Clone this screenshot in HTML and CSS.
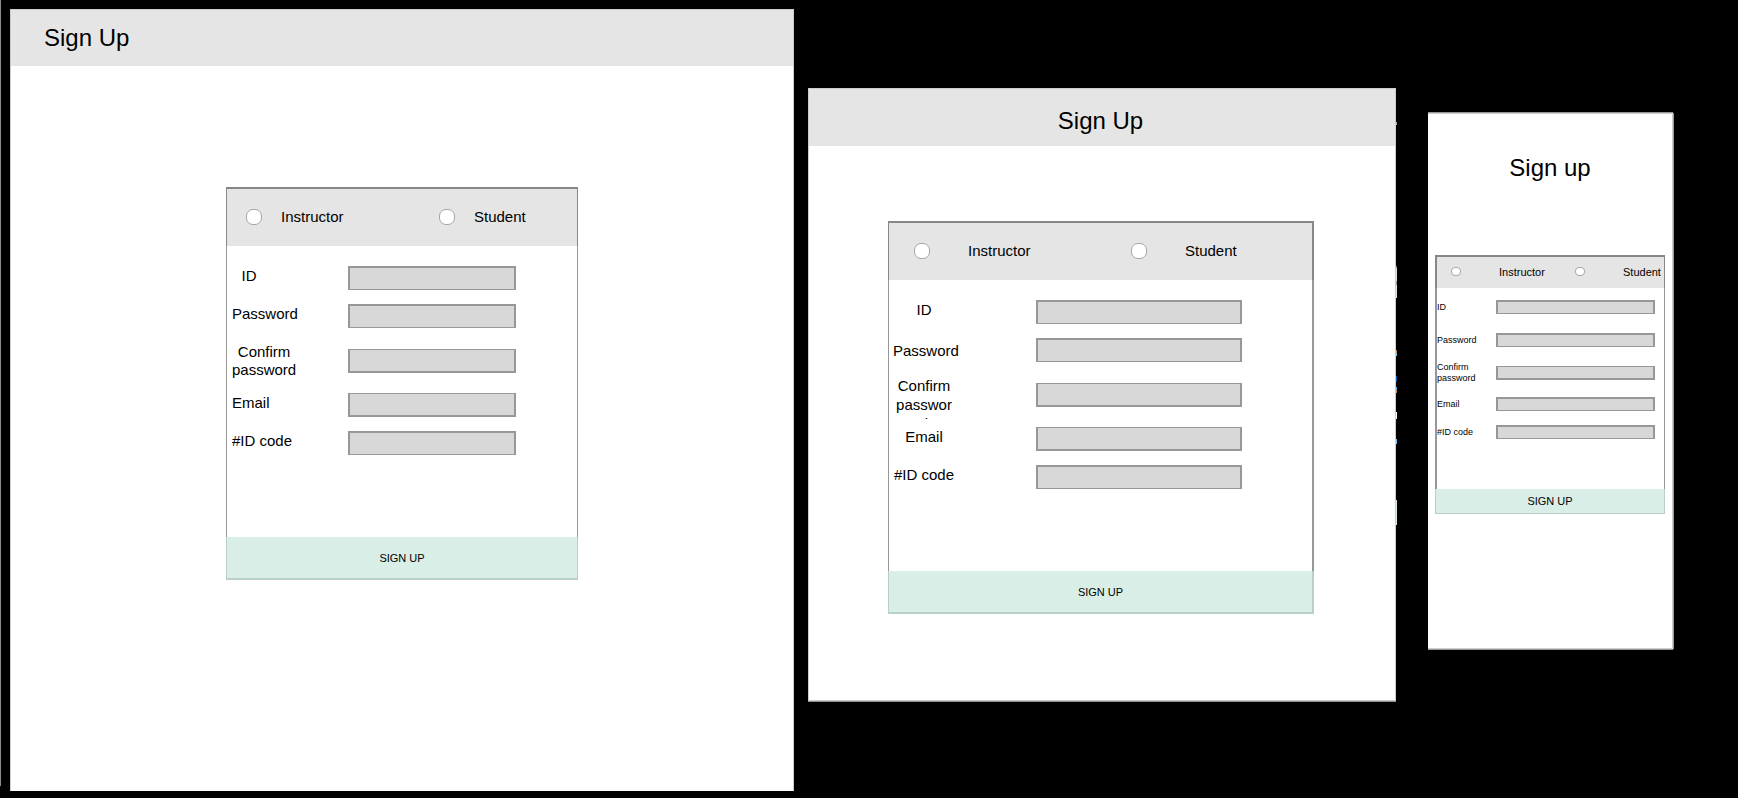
FILE: index.html
```html
<!DOCTYPE html>
<html lang="en">
<head>
<meta charset="utf-8">
<title>Sign Up</title>
<link rel="stylesheet" href="styles.css">
</head>
<body>
<main class="board">
  <section class="frame frame--desktop">
    <header class="bar"><h1 class="title">Sign Up</h1></header>
    <form class="card">
      <div class="roles">
        <div class="role"><input class="radio" type="radio" name="role-d" id="d-instructor"><label for="d-instructor">Instructor</label></div>
        <div class="role"><input class="radio" type="radio" name="role-d" id="d-student"><label for="d-student">Student</label></div>
      </div>
      <div class="fields">
        <div class="field"><label class="name" for="d-id">ID</label><input class="box" type="text" id="d-id"></div>
        <div class="field"><label class="name" for="d-pass">Password</label><input class="box" type="password" id="d-pass"></div>
        <div class="field field--middle"><label class="name" for="d-confirm">Confirm<br>password</label><input class="box box--low" type="password" id="d-confirm"></div>
        <div class="field"><label class="name" for="d-email">Email</label><input class="box box--low" type="email" id="d-email"></div>
        <div class="field"><label class="name" for="d-code">#ID code</label><input class="box" type="text" id="d-code"></div>
      </div>
      <button class="submit" type="button">SIGN UP</button>
    </form>
  </section>

  <section class="frame frame--tablet">
    <header class="bar"><h1 class="title">Sign Up</h1></header>
    <form class="card">
      <div class="roles">
        <div class="role"><input class="radio" type="radio" name="role-t" id="t-instructor"><label for="t-instructor">Instructor</label></div>
        <div class="role"><input class="radio" type="radio" name="role-t" id="t-student"><label for="t-student">Student</label></div>
      </div>
      <div class="fields">
        <div class="field"><label class="name" for="t-id">ID</label><input class="box" type="text" id="t-id"></div>
        <div class="field field--middle"><label class="name" for="t-pass">Password</label><input class="box" type="password" id="t-pass"></div>
        <div class="field field--middle"><label class="name name--clip" for="t-confirm">Confirm password</label><input class="box box--low" type="password" id="t-confirm"></div>
        <div class="field"><label class="name" for="t-email">Email</label><input class="box box--low" type="email" id="t-email"></div>
        <div class="field"><label class="name" for="t-code">#ID code</label><input class="box" type="text" id="t-code"></div>
      </div>
      <button class="submit" type="button">SIGN UP</button>
    </form>
  </section>

  <section class="frame frame--phone">
    <header class="bar"><h1 class="title">Sign up</h1></header>
    <form class="card">
      <div class="roles">
        <div class="role"><input class="radio" type="radio" name="role-p" id="p-instructor"><label for="p-instructor">Instructor</label></div>
        <div class="role"><input class="radio" type="radio" name="role-p" id="p-student"><label for="p-student">Student</label></div>
      </div>
      <div class="fields">
        <div class="field field--middle"><label class="name" for="p-id">ID</label><input class="box" type="text" id="p-id"></div>
        <div class="field field--middle"><label class="name" for="p-pass">Password</label><input class="box" type="password" id="p-pass"></div>
        <div class="field field--middle"><label class="name" for="p-confirm">Confirm<br>password</label><input class="box box--low" type="password" id="p-confirm"></div>
        <div class="field field--middle"><label class="name" for="p-email">Email</label><input class="box" type="email" id="p-email"></div>
        <div class="field field--middle"><label class="name" for="p-code">#ID code</label><input class="box" type="text" id="p-code"></div>
      </div>
      <button class="submit" type="button">SIGN UP</button>
    </form>
  </section>
</main>
</body>
</html>
```

FILE: styles.css
```css
*, *::before, *::after {
  box-sizing: border-box;
}

body {
  margin: 0;
  background: #000;
  color: #000;
  font-family: "Liberation Sans", Arial, sans-serif;
  font-size: 15px;
  line-height: 18px;
}

/* Artboards side by side on the dark canvas */
.board {
  position: relative;
  display: grid;
  grid-template-columns: 784fr 14px 588fr 32px 245fr;
  align-items: start;
  padding: 9px 65px 7px 10px;
}

/* Edge of the neighbouring artboard on the left */
.board::before {
  content: "";
  position: absolute;
  left: 0;
  top: 0;
  bottom: 12px;
  width: 1px;
  background: #8c8c8c;
}

.frame {
  position: relative;
  background: #fff;
  border: 1px solid #ccc;
}

.frame--desktop {
  grid-column: 1;
  border-bottom: 0;
  padding-bottom: 211px;
}

.frame--tablet {
  grid-column: 3;
  margin-top: 79px;
  padding-bottom: 86px;
  box-shadow: 0 1px 0 #8f8f8f;
}

.frame--phone {
  grid-column: 5;
  margin-top: 104px;
  border-left: 0;
  padding-bottom: 134px;
  box-shadow: 0 -1px 0 #999, 0 1px 0 #999, 1px 0 0 #999;
}

/* Slivers of overflowing layers along the tablet edge */
.frame--tablet::after {
  content: "";
  position: absolute;
  left: 100%;
  top: 0;
  width: 1px;
  height: 440px;
  margin-left: 1px;
  background: linear-gradient(
    transparent 33px, #aaa 33px 36px,
    transparent 36px 177px, #878787 177px 179px,
    #e5e5e5 179px 192px, #999 192px 196px, #e5e5e5 196px 209px,
    transparent 209px 261px, #c98352 261px 264px, #7fd0f5 264px 267px,
    transparent 267px 287px, #0a58b8 287px 293px,
    transparent 293px 298px, #5fb4ea 298px 301px, #c98352 301px 304px,
    transparent 304px 323px, #fff 323px 330px,
    transparent 330px 350px, #7fc4f5 350px 355px,
    transparent 355px 411px, #d9eee6 411px 436px, transparent 436px);
}

.bar {
  display: flex;
  align-items: center;
  height: 56px;
  background: #e5e5e5;
}

.frame--desktop .bar {
  padding-left: 33px;
  margin-bottom: 121px;
}

.frame--tablet .bar {
  height: 57px;
  justify-content: center;
  padding: 6px 3px 0 0;
  margin-bottom: 75px;
}

.frame--phone .bar {
  height: 108px;
  justify-content: center;
  background: none;
  margin-bottom: 33px;
}

.title {
  margin: 0;
  font-size: 24px;
  line-height: 28px;
  font-weight: normal;
}

.card {
  width: 96%;
  margin: 0 auto;
}

.frame--desktop .card { max-width: 352px; }

.frame--tablet .card {
  max-width: 426px;
  margin-left: 79px;
}

.frame--phone .card {
  max-width: 230px;
  margin-left: 7px;
}

/* Role picker */
.roles {
  display: grid;
  align-items: center;
  height: 59px;
  padding-bottom: 2px;
  background: #e5e5e5;
  border: solid #878787;
  border-width: 2px 1px 0;
}

.role {
  display: flex;
  align-items: center;
  white-space: nowrap;
}

.radio {
  appearance: none;
  flex: none;
  width: 16px;
  height: 16px;
  margin: 0;
  border: 1px solid #a6a6a6;
  border-radius: 7px;
  background: #fff;
}

.frame--desktop .roles {
  grid-template-columns: 193fr 138fr;
  padding-left: 19px;
}

.frame--desktop .role { gap: 19px; }

.frame--tablet .roles {
  grid-template-columns: 217fr 181fr;
  padding-left: 25px;
  border-right-width: 2px;
}

.frame--tablet .role { gap: 38px; }

.frame--phone .roles {
  grid-template-columns: 124fr 89fr;
  height: 33px;
  padding-left: 14px;
  border-left-width: 2px;
  font-size: 11px;
}

.frame--phone .role { gap: 38px; }

.frame--phone .radio {
  width: 10px;
  height: 9px;
  border-radius: 4px;
}

/* Form rows */
.fields {
  display: grid;
  grid-template-rows: 24px 24px 37px 24px 24px;
  row-gap: 14px;
  padding: 20px 0 82px;
  border: solid #979797;
  border-width: 0 1px;
}

.frame--tablet .fields {
  border-right-width: 2px;
}

.frame--phone .fields {
  grid-template-rows: 24px 18px 22px 18px 14px;
  row-gap: 12px;
  padding: 7px 0 50px;
  border-left-width: 2px;
}

.field {
  display: grid;
  align-items: start;
}

.field--middle { align-items: center; }

.frame--desktop .field { grid-template-columns: 121fr 168fr 61fr; }
.frame--tablet .field { grid-template-columns: 147fr 206fr 70fr; }
.frame--phone .field { grid-template-columns: 59fr 159fr 9fr; }

.name {
  justify-self: start;
  padding-top: 1px;
  text-align: center;
  white-space: nowrap;
}

.frame--desktop .name {
  min-width: 34px;
  margin-left: 5px;
}

.frame--tablet .name {
  width: 62px;
  margin-left: 4px;
}

/* Fixed label box: the last line is cropped by its lower edge */
.frame--tablet .name--clip {
  align-self: start;
  height: 43px;
  margin-bottom: -6px;
  padding-top: 0;
  overflow: hidden;
  line-height: 19px;
  white-space: normal;
  overflow-wrap: anywhere;
}

.frame--phone .name {
  font-size: 9px;
  line-height: 11px;
  text-align: left;
}

.box {
  width: 100%;
  height: 24px;
  margin: 0;
  padding: 0 4px;
  border: solid #979797;
  border-width: 2px 2px 1px;
  border-radius: 0;
  background: #d8d8d8;
  font: inherit;
}

.box--low { border-width: 1px 2px 2px; }

.frame--phone .box {
  height: 14px;
  font-size: 9px;
}

.submit {
  display: block;
  width: 100%;
  height: 43px;
  padding: 0;
  border: solid #b9d0c8;
  border-width: 0 1px 2px;
  border-radius: 0;
  background: #d9eee6;
  color: #000;
  font-family: inherit;
  font-size: 11px;
}

.frame--tablet .submit { border-right-width: 2px; }

.frame--phone .submit {
  height: 25px;
  border-bottom-width: 1px;
}
```
